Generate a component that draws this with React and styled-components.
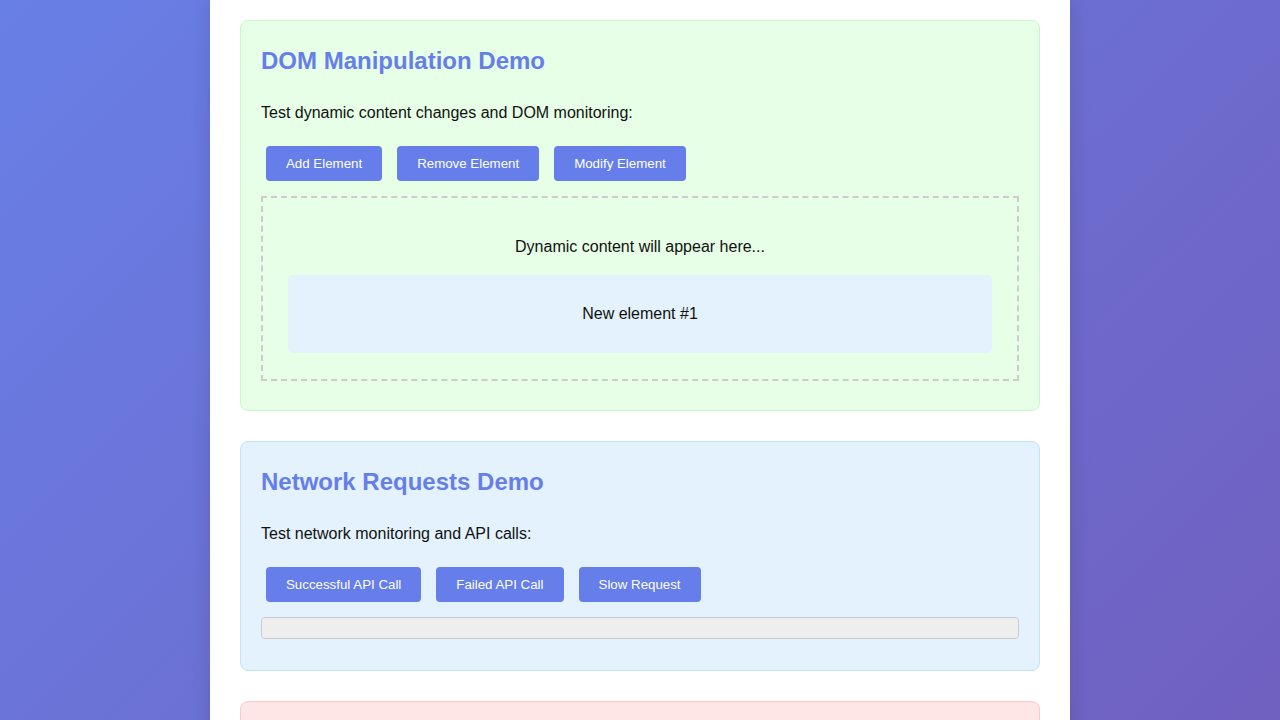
import React, { useState } from "react";
import styled, { createGlobalStyle } from "styled-components";

const GlobalStyle = createGlobalStyle`
  html, body {
    margin: 0;
    padding: 0;
  }
  body {
    font-family: "Liberation Sans", Arial, sans-serif;
    background: linear-gradient(135deg, #687fe6 0%, #7060c0 100%) fixed;
    min-height: 100vh;
    color: #111;
  }
`;

const tones = {
  green: { bg: "#e6ffe6", border: "#c8f7c8" },
  blue: { bg: "#e3f2fd", border: "#c9e1f7" },
  red: { bg: "#ffe6e6", border: "#fbcaca" },
};

const Container = styled.main`
  width: 800px;
  margin: 0 auto;
  padding: 20px 30px 30px;
  background: #fff;
  box-shadow: 0 0 20px rgba(0, 0, 0, 0.12);
  min-height: 100vh;
`;

const Section = styled.section`
  background: ${(p) => tones[p.$tone].bg};
  border: 1px solid ${(p) => tones[p.$tone].border};
  border-radius: 8px;
  padding: 20px;
  margin-bottom: 30px;
`;

const Title = styled.h2`
  margin: 6px 0 0;
  font-size: 24px;
  line-height: 28px;
  font-weight: bold;
  color: #667eea;
`;

const Text = styled.p`
  margin: 29px 0 0;
  font-size: 16px;
  line-height: 18px;
`;

const ButtonRow = styled.div`
  display: flex;
  gap: 5px;
  margin-top: 19px;
`;

const Button = styled.button`
  margin: 5px;
  padding: 10px 20px;
  border: none;
  border-radius: 4px;
  background: #667eea;
  color: #fff;
  font-family: "Liberation Sans", Arial, sans-serif;
  font-size: 13.3px;
  line-height: 15px;
  cursor: pointer;
`;

const DropZone = styled.div`
  margin: 10px 0 9px;
  padding: 20px 20px 21px;
  border: 2px dashed #ccc;
  text-align: center;
`;

const Placeholder = styled.p`
  margin: 20px 0 19px;
  font-size: 16px;
  line-height: 18px;
`;

const DynamicItem = styled.div`
  margin: 5px;
  padding: 30px;
  background: #e3f2fd;
  border-radius: 5px;
  font-size: 16px;
  line-height: 18px;
`;

const Output = styled.div`
  margin: 10px 0 11px;
  padding: 10px;
  background: #eee;
  border: 1px solid #ccc;
  border-radius: 4px;
  font-family: "Liberation Mono", monospace;
  font-size: 13px;
`;

export default function App() {
  const [items, setItems] = useState([1]);

  return (
    <>
      <GlobalStyle />
      <Container>
        <Section $tone="green">
          <Title>DOM Manipulation Demo</Title>
          <Text>Test dynamic content changes and DOM monitoring:</Text>
          <ButtonRow>
            <Button onClick={() => setItems([...items, items.length + 1])}>
              Add Element
            </Button>
            <Button onClick={() => setItems(items.slice(0, -1))}>
              Remove Element
            </Button>
            <Button>Modify Element</Button>
          </ButtonRow>
          <DropZone>
            <Placeholder>Dynamic content will appear here...</Placeholder>
            {items.map((n) => (
              <DynamicItem key={n}>New element #{n}</DynamicItem>
            ))}
          </DropZone>
        </Section>

        <Section $tone="blue">
          <Title>Network Requests Demo</Title>
          <Text>Test network monitoring and API calls:</Text>
          <ButtonRow>
            <Button>Successful API Call</Button>
            <Button>Failed API Call</Button>
            <Button>Slow Request</Button>
          </ButtonRow>
          <Output />
        </Section>

        <Section $tone="red">
          <Title>Error Handling Demo</Title>
          <Text>Test error tracking and console monitoring:</Text>
          <ButtonRow>
            <Button>Throw Error</Button>
            <Button>Console Warning</Button>
          </ButtonRow>
          <Output />
        </Section>
      </Container>
    </>
  );
}
